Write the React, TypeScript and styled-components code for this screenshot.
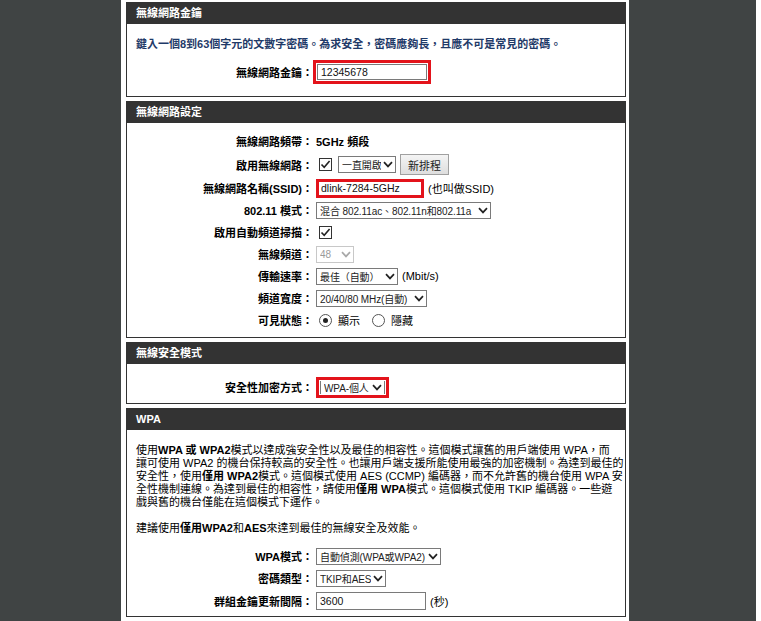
import React from "react";
import styled, { createGlobalStyle } from "styled-components";

const GlobalStyle = createGlobalStyle`
  html, body { margin: 0; padding: 0; background: #ffffff; }
  body {
    font-family: "Liberation Sans", "Noto Sans CJK TC", sans-serif;
    font-size: 11px;
    color: #000;
  }
  * { box-sizing: border-box; }
`;

const Page = styled.div`
  width: 756px;
  min-height: 621px;
  background: #404444;
  display: flex;
`;

const Column = styled.main`
  margin-left: 121px;
  width: 508px;
  background: #fff;
  padding: 2px 3px 0 5px;
  display: flex;
  flex-direction: column;
  gap: 4px;
`;

const Box = styled.section`
  border: 1px solid #333;
  background: #fff;
`;

const BoxHeader = styled.h2`
  margin: 0;
  height: 21px;
  line-height: 21px;
  padding-left: 9px;
  background: #333;
  color: #fff;
  font-size: 11px;
  font-weight: bold;
`;

const BoxBody = styled.div<{ $pt: number; $pb: number }>`
  padding: ${(p) => p.$pt}px 0 ${(p) => p.$pb}px;
`;

const Note = styled.p`
  margin: 0;
  padding-left: 9px;
  line-height: 16px;
  color: #1f3a68;
  font-weight: bold;
  white-space: nowrap;
`;

const FormRow = styled.div<{ $h: number; $mt?: number }>`
  display: flex;
  align-items: center;
  height: ${(p) => p.$h}px;
  margin-top: ${(p) => p.$mt ?? 0}px;
`;

const Label = styled.div`
  width: 186px;
  flex: none;
  text-align: right;
  font-weight: bold;
  white-space: nowrap;
`;

const Field = styled.div<{ $pl?: number }>`
  display: flex;
  align-items: center;
  gap: 4px;
  padding-left: ${(p) => p.$pl ?? 3}px;
  white-space: nowrap;
`;

const Strong = styled.span`
  font-weight: bold;
`;

const RedFrame = styled.span`
  display: inline-flex;
  border: 3px solid #e3131b;
  padding: 1px;
`;

const TextInput = styled.div<{ $w: number; $h: number; $highlight?: boolean }>`
  width: ${(p) => p.$w}px;
  height: ${(p) => p.$h}px;
  border: ${(p) => (p.$highlight ? "3px solid #e3131b" : "1px solid #7a7a7a")};
  background: #fff;
  padding-left: ${(p) => (p.$highlight ? 2 : 3)}px;
  display: flex;
  align-items: center;
  color: #111;
  font-size: 10.5px;
`;

const SelectBox = styled.div<{ $w: number; $disabled?: boolean; $bare?: boolean }>`
  width: ${(p) => p.$w}px;
  height: ${(p) => (p.$bare ? 13 : 17)}px;
  border: 1px solid ${(p) => (p.$disabled ? "#c8c8c8" : "#7a7a7a")};
  border-top-width: ${(p) => (p.$bare ? 0 : 1)}px;
  border-bottom-width: ${(p) => (p.$bare ? 0 : 1)}px;
  background: #fff;
  color: ${(p) => (p.$disabled ? "#9a9a9a" : "#222")};
  display: flex;
  align-items: center;
  padding: 0 2px 0 3px;
  gap: 2px;
  font-size: 10px;
  letter-spacing: -0.1px;
`;

const SelectText = styled.span`
  flex: 1;
  overflow: hidden;
  white-space: nowrap;
`;

const CheckBox = styled.span`
  width: 13px;
  height: 13px;
  border: 1px solid #333;
  background: #fff;
  display: inline-flex;
  align-items: center;
  justify-content: center;
  margin: 0 2px 0 3px;
`;

const Button = styled.div`
  width: 49px;
  height: 21px;
  border: 1px solid #a0a0a0;
  background: linear-gradient(#f4f4f4, #dedede);
  display: flex;
  align-items: center;
  justify-content: center;
  color: #222;
`;

const Radio = styled.span<{ $on?: boolean }>`
  width: 13px;
  height: 13px;
  border-radius: 50%;
  border: 1px solid #555;
  background: #fff;
  display: inline-flex;
  align-items: center;
  justify-content: center;
  margin-left: 3px;
  &::after {
    content: "";
    width: 5px;
    height: 5px;
    border-radius: 50%;
    background: ${(p) => (p.$on ? "#222" : "transparent")};
  }
`;

const RadioText = styled.span`
  margin: 0 5px 0 2px;
`;

const Para = styled.div`
  padding-left: 9px;
  line-height: 13px;
  white-space: nowrap;
`;

const ParaGap = styled.div`
  height: 13px;
`;

const Chevron = ({ color = "#222" }: { color?: string }) => (
  <svg width="10" height="7" viewBox="0 0 10 7" style={{ flex: "none" }}>
    <path d="M1 1.2 L5 5.4 L9 1.2" stroke={color} strokeWidth="1.7" fill="none" />
  </svg>
);

const Select = ({
  w,
  text,
  disabled,
  bare,
}: {
  w: number;
  text: string;
  disabled?: boolean;
  bare?: boolean;
}) => (
  <SelectBox $w={w} $disabled={disabled} $bare={bare}>
    <SelectText>{text}</SelectText>
    <Chevron color={disabled ? "#a8a8a8" : "#222"} />
  </SelectBox>
);

const Check = () => (
  <CheckBox>
    <svg width="11" height="11" viewBox="0 0 11 11">
      <path d="M1.5 5.5 L4.2 8.3 L9.6 2" stroke="#222" strokeWidth="1.6" fill="none" />
    </svg>
  </CheckBox>
);

export default function App() {
  return (
    <>
      <GlobalStyle />
      <Page>
        <Column>
          <Box>
            <BoxHeader>無線網路金鑰</BoxHeader>
            <BoxBody $pt={12} $pb={12}>
              <Note>鍵入一個8到63個字元的文數字密碼。為求安全，密碼應夠長，且應不可是常見的密碼。</Note>
              <FormRow $h={24} $mt={8}>
                <Label>無線網路金鑰：</Label>
                <Field $pl={0}>
                  <RedFrame>
                    <TextInput $w={110} $h={16}>12345678</TextInput>
                  </RedFrame>
                </Field>
              </FormRow>
            </BoxBody>
          </Box>

          <Box>
            <BoxHeader>無線網路設定</BoxHeader>
            <BoxBody $pt={7} $pb={6}>
              <FormRow $h={22}>
                <Label>無線網路頻帶：</Label>
                <Field>
                  <Strong>5GHz 頻段</Strong>
                </Field>
              </FormRow>
              <FormRow $h={25}>
                <Label>啟用無線網路：</Label>
                <Field>
                  <Check />
                  <Select w={58} text="一直開啟" />
                  <Button>新排程</Button>
                </Field>
              </FormRow>
              <FormRow $h={22}>
                <Label>無線網路名稱(SSID)：</Label>
                <Field>
                  <TextInput $w={108} $h={19} $highlight>
                    dlink-7284-5GHz
                  </TextInput>
                  <span>(也叫做SSID)</span>
                </Field>
              </FormRow>
              <FormRow $h={22}>
                <Label>802.11 模式：</Label>
                <Field>
                  <Select w={175} text="混合 802.11ac、802.11n和802.11a" />
                </Field>
              </FormRow>
              <FormRow $h={22}>
                <Label>啟用自動頻道掃描：</Label>
                <Field>
                  <Check />
                </Field>
              </FormRow>
              <FormRow $h={22}>
                <Label>無線頻道：</Label>
                <Field>
                  <Select w={38} text="48" disabled />
                </Field>
              </FormRow>
              <FormRow $h={22}>
                <Label>傳輸速率：</Label>
                <Field>
                  <Select w={82} text="最佳（自動）" />
                  <span>(Mbit/s)</span>
                </Field>
              </FormRow>
              <FormRow $h={22}>
                <Label>頻道寬度：</Label>
                <Field>
                  <Select w={111} text="20/40/80 MHz(自動)" />
                </Field>
              </FormRow>
              <FormRow $h={22}>
                <Label>可見狀態：</Label>
                <Field>
                  <Radio $on />
                  <RadioText>顯示</RadioText>
                  <Radio />
                  <RadioText>隱藏</RadioText>
                </Field>
              </FormRow>
            </BoxBody>
          </Box>

          <Box>
            <BoxHeader>無線安全模式</BoxHeader>
            <BoxBody $pt={12} $pb={5}>
              <FormRow $h={22}>
                <Label>安全性加密方式：</Label>
                <Field>
                  <RedFrame>
                    <Select w={65} text="WPA-個人" bare />
                  </RedFrame>
                </Field>
              </FormRow>
            </BoxBody>
          </Box>

          <Box>
            <BoxHeader>WPA</BoxHeader>
            <BoxBody $pt={14} $pb={3}>
              <Para>
                使用<b>WPA 或 WPA2</b>模式以達成強安全性以及最佳的相容性。這個模式讓舊的用戶端使用 WPA，而
                <br />
                讓可使用 WPA2 的機台保持較高的安全性。也讓用戶端支援所能使用最強的加密機制。為達到最佳的
                <br />
                安全性，使用<b>僅用 WPA2</b>模式。這個模式使用 AES (CCMP) 編碼器，而不允許舊的機台使用 WPA 安
                <br />
                全性機制連線。為達到最佳的相容性，請使用<b>僅用 WPA</b>模式。這個模式使用 TKIP 編碼器。一些遊
                <br />
                戲與舊的機台僅能在這個模式下運作。
              </Para>
              <ParaGap />
              <Para>
                建議使用<b>僅用WPA2</b>和<b>AES</b>來達到最佳的無線安全及效能。
              </Para>
              <FormRow $h={22} $mt={10}>
                <Label>WPA模式：</Label>
                <Field>
                  <Select w={125} text="自動偵測(WPA或WPA2)" />
                </Field>
              </FormRow>
              <FormRow $h={22}>
                <Label>密碼類型：</Label>
                <Field>
                  <Select w={70} text="TKIP和AES" />
                </Field>
              </FormRow>
              <FormRow $h={24}>
                <Label>群組金鑰更新間隔：</Label>
                <Field>
                  <TextInput $w={110} $h={18}>3600</TextInput>
                  <span>(秒)</span>
                </Field>
              </FormRow>
            </BoxBody>
          </Box>
        </Column>
      </Page>
    </>
  );
}
